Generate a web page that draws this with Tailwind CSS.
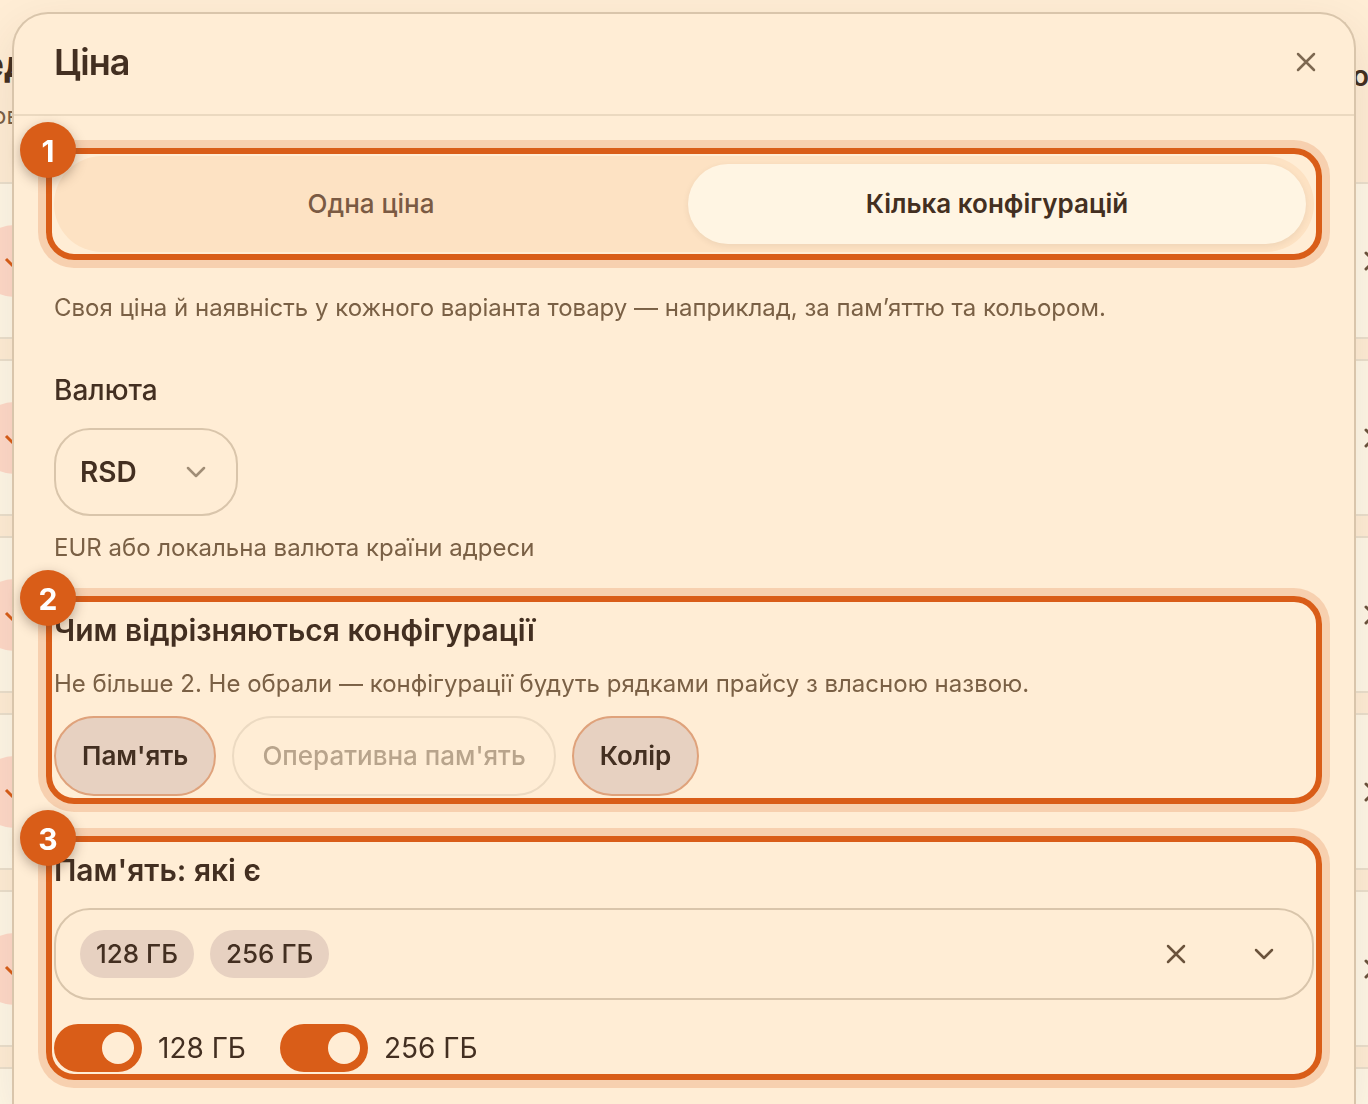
<!DOCTYPE html>
<html lang="uk">
  <head>
    <meta charset="UTF-8" />
    <meta name="viewport" content="width=device-width, initial-scale=1.0" />
    <title>Ціна</title>
    <script src="https://cdn.jsdelivr.net/npm/@tailwindcss/browser@4"></script>
  </head>
  <body
    class="h-screen overflow-hidden bg-[#ffedd5] font-['Inter','Liberation_Sans',sans-serif] text-[#432f21]"
  >
    <!-- page behind the dialog -->
    <div aria-hidden="true" class="h-screen overflow-hidden">
      <header class="flex h-[182px] items-start justify-between pt-10">
        <div>
          <div class="flex w-7 justify-end text-4xl leading-[48px] font-bold">ед</div>
          <div class="mt-3 flex w-5 justify-end text-2xl leading-8 text-[#7a6045]">ов</div>
        </div>
        <div class="mt-4 w-4 text-[28px] leading-10 font-semibold">о</div>
      </header>
      <div id="rows" class="space-y-5"></div>
    </div>

    <!-- dialog -->
    <div
      role="dialog"
      aria-labelledby="dialogTitle"
      class="fixed inset-x-3 top-3 bottom-0 rounded-t-[36px] border-2 border-b-0 border-[#d9c5ab] bg-[#ffedd5] shadow-[0_16px_48px_rgba(67,47,33,0.10)]"
    >
      <div class="flex h-[102px] items-center justify-between border-b-2 border-[#ebd9c0] pr-6 pb-1 pl-10">
        <h2 id="dialogTitle" class="text-4xl font-semibold tracking-tight">Ціна</h2>
        <button type="button" aria-label="Закрити" class="flex size-12 items-center justify-center text-[#7d6851]">
          <svg class="size-6" viewBox="0 0 24 24" fill="none" stroke="currentColor" stroke-width="2.5" stroke-linecap="round">
            <path d="M4 4l16 16M20 4L4 20" />
          </svg>
        </button>
      </div>

      <div class="px-10 pt-10">
        <!-- step 1 -->
        <section class="relative">
          <div class="grid grid-cols-2 gap-2 rounded-full bg-[#fde2c3] p-2">
            <button type="button" class="h-20 rounded-full pb-0.5 text-[26px] font-medium text-[#7a5a43]">Одна ціна</button>
            <button
              type="button"
              class="h-20 rounded-full bg-[#fff5e3] pb-0.5 text-[26px] font-semibold shadow-[0_2px_6px_rgba(67,47,33,0.08)]"
            >
              Кілька конфігурацій
            </button>
          </div>
          <div class="pointer-events-none absolute -inset-2 rounded-[28px] border-6 border-[#d95d18] ring-8 ring-[#d95d18]/20">
            <span
              class="absolute -top-8 -left-8 flex size-14 items-center justify-center rounded-full bg-[#d95d18] pt-0.5 text-[30px] font-bold text-white shadow-[0_4px_12px_rgba(67,47,33,0.35)]"
              >1</span
            >
          </div>
        </section>

        <p class="mt-10 text-2xl leading-8 text-[#7a6045]">
          Своя ціна й наявність у кожного варіанта товару — наприклад, за пам’яттю та кольором.
        </p>

        <label for="currency" class="mt-11 block text-[28px] leading-[44px] font-medium">Валюта</label>
        <div class="relative mt-4 w-[184px]">
          <select
            id="currency"
            class="block h-[88px] w-full appearance-none rounded-[36px] border-2 border-[#d9c5ab] bg-transparent px-6 text-[28px] font-semibold"
          >
            <option>RSD</option>
            <option>EUR</option>
          </select>
          <svg
            class="pointer-events-none absolute top-8 right-[30px] size-6 text-[#a08d76]"
            viewBox="0 0 24 24"
            fill="none"
            stroke="currentColor"
            stroke-width="2.5"
            stroke-linecap="round"
            stroke-linejoin="round"
          >
            <path d="M4 8l8 8 8-8" />
          </svg>
        </div>
        <p class="mt-4 text-2xl leading-8 text-[#7a6045]">EUR або локальна валюта країни адреси</p>

        <!-- step 2 -->
        <section class="relative mt-10">
          <h3 class="text-[30px] leading-[52px] font-semibold">Чим відрізняються конфігурації</h3>
          <p class="mt-3 text-2xl leading-8 text-[#7a6045]">
            Не більше 2. Не обрали — конфігурації будуть рядками прайсу з власною назвою.
          </p>
          <div class="mt-4 flex gap-4">
            <button
              type="button"
              class="h-20 rounded-full border-2 border-[#dfa27b] bg-[#e7d1c1] px-[26px] pb-0.5 text-[26px] font-semibold"
            >
              Пам'ять
            </button>
            <button
              type="button"
              disabled
              class="h-20 rounded-full border-2 border-[#ecdac2] px-7 pb-0.5 text-[26px] font-medium text-[#b8a48c]"
            >
              Оперативна пам'ять
            </button>
            <button
              type="button"
              class="h-20 rounded-full border-2 border-[#dfa27b] bg-[#e7d1c1] px-[26px] pb-0.5 text-[26px] font-semibold"
            >
              Колір
            </button>
          </div>
          <div class="pointer-events-none absolute -inset-2 rounded-[28px] border-6 border-[#d95d18] ring-8 ring-[#d95d18]/20">
            <span
              class="absolute -top-8 -left-8 flex size-14 items-center justify-center rounded-full bg-[#d95d18] pt-0.5 text-[30px] font-bold text-white shadow-[0_4px_12px_rgba(67,47,33,0.35)]"
              >2</span
            >
          </div>
        </section>

        <!-- step 3 -->
        <section class="relative mt-12">
          <h3 class="text-[30px] leading-[52px] font-semibold">Пам'ять: які є</h3>
          <div class="mt-3 flex h-[92px] items-center gap-4 rounded-[36px] border-2 border-[#d9c5ab] px-6">
            <span class="flex h-12 items-center rounded-full bg-[#e7d1c1] px-4 pb-0.5 text-[26px] font-medium">128 ГБ</span>
            <span class="flex h-12 items-center rounded-full bg-[#e7d1c1] px-4 pb-0.5 text-[26px] font-medium">256 ГБ</span>
            <div class="ml-auto flex gap-10 text-[#6b533c]">
              <button type="button" aria-label="Очистити" class="flex size-12 items-center justify-center">
                <svg class="size-6" viewBox="0 0 24 24" fill="none" stroke="currentColor" stroke-width="2.5" stroke-linecap="round">
                  <path d="M4 4l16 16M20 4L4 20" />
                </svg>
              </button>
              <button type="button" aria-label="Розгорнути" class="flex size-12 items-center justify-center">
                <svg
                  class="size-6"
                  viewBox="0 0 24 24"
                  fill="none"
                  stroke="currentColor"
                  stroke-width="2.5"
                  stroke-linecap="round"
                  stroke-linejoin="round"
                >
                  <path d="M4 8l8 8 8-8" />
                </svg>
              </button>
            </div>
          </div>
          <div class="mt-6 flex gap-[34px]">
            <label class="flex items-center gap-4 text-[28px] leading-[48px]">
              <input
                type="checkbox"
                checked
                class="flex h-12 w-[88px] appearance-none items-center rounded-full bg-[#cdb9a3] px-2 before:size-8 before:rounded-full before:bg-[#ffedd5] checked:justify-end checked:bg-[#d95d18]"
              />
              128 ГБ
            </label>
            <label class="flex items-center gap-4 text-[28px] leading-[48px]">
              <input
                type="checkbox"
                checked
                class="flex h-12 w-[88px] appearance-none items-center rounded-full bg-[#cdb9a3] px-2 before:size-8 before:rounded-full before:bg-[#ffedd5] checked:justify-end checked:bg-[#d95d18]"
              />
              256 ГБ
            </label>
          </div>
          <div class="pointer-events-none absolute -inset-2 rounded-[28px] border-6 border-[#d95d18] ring-8 ring-[#d95d18]/20">
            <span
              class="absolute -top-8 -left-8 flex size-14 items-center justify-center rounded-full bg-[#d95d18] pt-0.5 text-[30px] font-bold text-white shadow-[0_4px_12px_rgba(67,47,33,0.35)]"
              >3</span
            >
          </div>
        </section>
      </div>
    </div>

    <script>
      const rows = document.getElementById("rows");
      for (let i = 0; i < 6; i++) {
        const row = document.createElement("div");
        row.className =
          "flex h-[157px] items-center justify-between overflow-hidden border-y-2 border-[#ebdfcc] bg-[#fff7e6]";
        row.innerHTML = `
          <div class="-ml-[22px] flex size-[72px] items-center justify-center rounded-full bg-[#ffd9c8] text-[#d95d18]">
            <svg class="size-6" viewBox="0 0 24 24" fill="none" stroke="currentColor" stroke-width="3"><path d="M4 10l8 8 8-8" /></svg>
          </div>
          <svg class="-mr-4 size-6 text-[#6b533c]" viewBox="0 0 24 24" fill="none" stroke="currentColor" stroke-width="3" stroke-linecap="round"><path d="M6 4l16 16M22 4L6 20" /></svg>`;
        rows.appendChild(row);
      }
    </script>
  </body>
</html>
